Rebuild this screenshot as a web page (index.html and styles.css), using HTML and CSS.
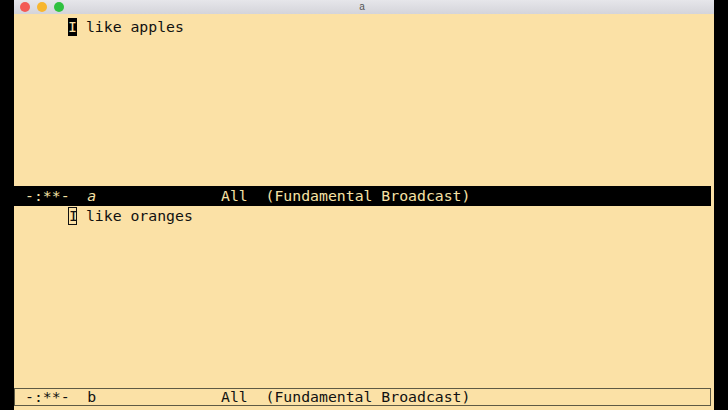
FILE: index.html
```html
<!DOCTYPE html>
<html>
<head>
<meta charset="utf-8">
<link rel="stylesheet" href="styles.css">
</head>
<body>
<div class="screen">
  <div class="win">
    <div class="titlebar">
      <div class="lights">
        <span class="dot red"></span>
        <span class="dot yellow"></span>
        <span class="dot green"></span>
      </div>
      <div class="title">a</div>
      <div></div>
    </div>
    <div class="pane pane-top">
      <pre class="line"><span class="cur cur-solid">I</span> like apples</pre>
    </div>
    <div class="modeline active">
      <pre class="ml">-:**-  <span class="bufname">a</span>              All  (Fundamental Broadcast)</pre>
    </div>
    <div class="pane pane-bottom">
      <pre class="line"><span class="cur cur-hollow">I</span> like oranges</pre>
    </div>
    <div class="modeline inactive">
      <pre class="ml">-:**-  b              All  (Fundamental Broadcast)</pre>
    </div>
    <div class="echo"></div>
  </div>
</div>
</body>
</html>
```
FILE: styles.css
```css
html, body {
  margin: 0;
  padding: 0;
  background: #000;
}
.screen {
  width: 728px;
  height: 410px;
  background: #000;
  overflow: hidden;
}
.win {
  margin-left: 14px;
  width: 700px;
  height: 410px;
  background: #fbe1a6;
  display: flex;
  flex-direction: column;
}
.titlebar {
  height: 14px;
  background: linear-gradient(#e6e6ea, #d4d4da);
  display: grid;
  grid-template-columns: 1fr auto 1fr;
  align-items: center;
}
.lights {
  display: flex;
  gap: 7px;
  padding-left: 6px;
}
.dot {
  width: 10px;
  height: 10px;
  border-radius: 50%;
  display: block;
  margin-top: -1px;
}
.red { background: #f35a55; }
.yellow { background: #f7b62f; }
.green { background: #2fc13f; }
.title {
  font-family: "Liberation Sans", Arial, sans-serif;
  font-size: 10px;
  color: #555;
  margin-top: -2px;
  margin-left: -4px;
}
pre {
  margin: 0;
  font-family: "DejaVu Sans Mono", monospace;
  font-size: 14.8px;
}
.pane {
  padding-left: 54px;
}
.pane-top {
  height: 172px;
  padding-top: 4px;
  box-sizing: border-box;
}
.pane-bottom {
  height: 182px;
  padding-top: 1px;
  box-sizing: border-box;
}
.line {
  line-height: 18px;
  color: #111;
}
.cur {
  display: inline-block;
  width: 9px;
  height: 18px;
  box-sizing: border-box;
  vertical-align: top;
  text-align: center;
}
.cur-solid {
  background: #000;
  color: #fbe1a6;
}
.cur-hollow {
  border: 1px solid #111;
  line-height: 16px;
}
.modeline {
  margin-right: 3px;
  box-sizing: border-box;
}
.modeline .ml {
  padding-left: 11px;
}
.active {
  height: 20px;
  background: #000;
}
.active .ml {
  color: #f6e2a6;
  line-height: 20px;
}
.bufname {
  font-style: italic;
}
.inactive {
  height: 18px;
  border: 1px solid #5e5a44;
  background: #fbe1a6;
}
.inactive .ml {
  color: #111;
  line-height: 16px;
  padding-left: 10px;
}
.echo {
  flex: 1;
}
```
